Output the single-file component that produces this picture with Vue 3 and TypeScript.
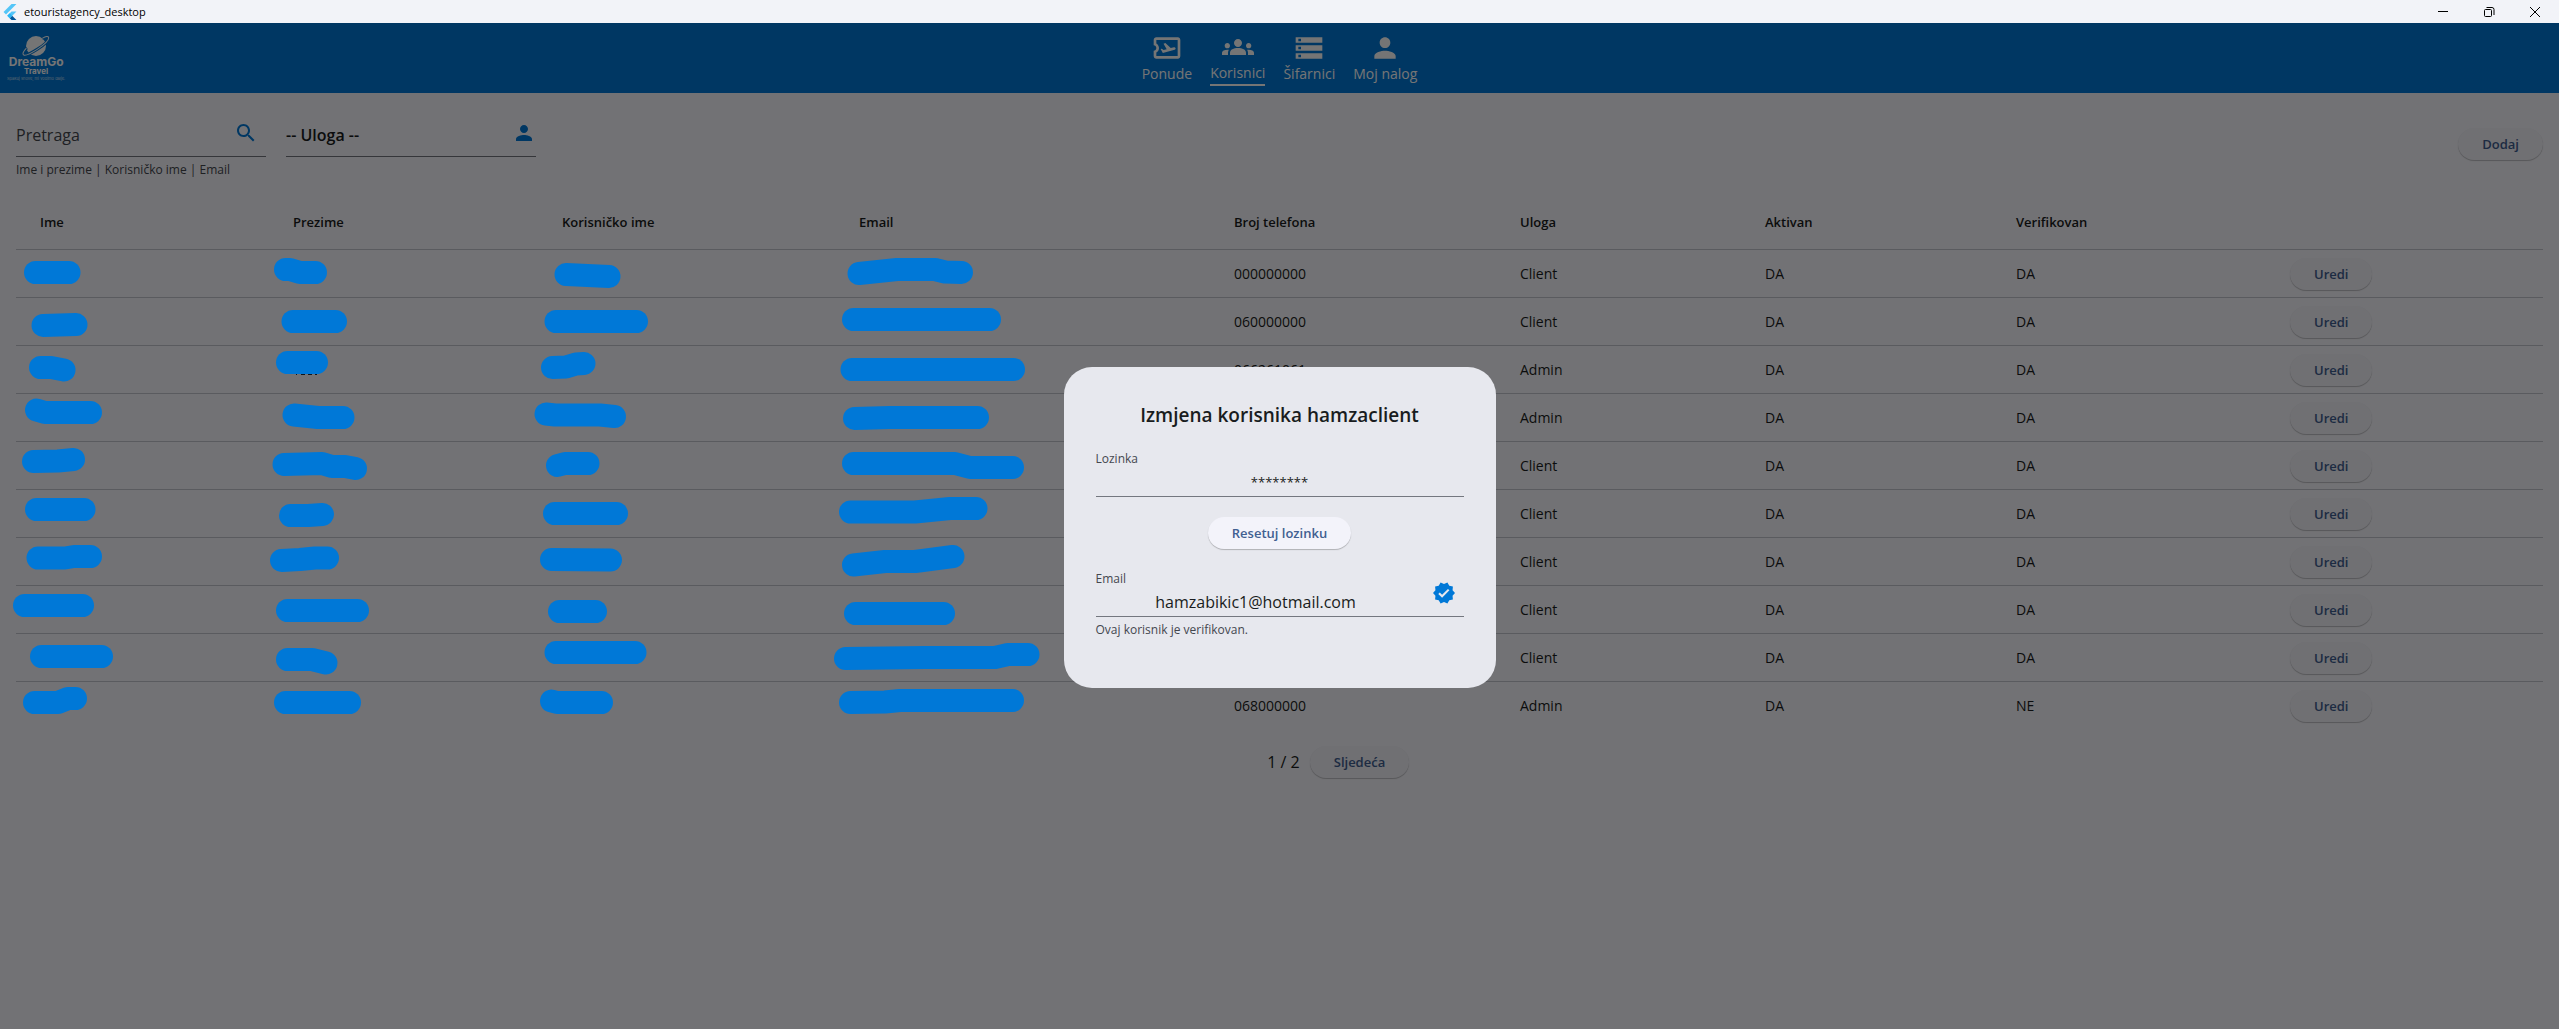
<script setup lang="ts">
import { ref } from 'vue'

interface NavItem { label: string; icon: string; active: boolean }
interface Column { title: string; weight: number }
interface User { phone: string; role: string; active: string; verified: string }

const personIcon = 'M12 12c2.21 0 4-1.79 4-4s-1.79-4-4-4-4 1.79-4 4 1.79 4 4 4zm0 2c-2.67 0-8 1.34-8 4v2h16v-2c0-2.66-5.33-4-8-4z'
const searchIcon = 'M15.5 14h-.79l-.28-.27C15.41 12.59 16 11.11 16 9.5 16 5.91 13.09 3 9.5 3S3 5.91 3 9.5 5.91 16 9.5 16c1.61 0 3.09-.59 4.23-1.57l.27.28v.79l5 4.99L20.49 19l-4.99-5zm-6 0C7.01 14 5 11.99 5 9.5S7.01 5 9.5 5 14 7.01 14 9.5 11.99 14 9.5 14z'
const verifiedIcon = 'M23 12l-2.44-2.79.34-3.69-3.61-.82-1.89-3.2L12 2.96 8.6 1.5 6.71 4.69 3.1 5.5l.34 3.7L1 12l2.44 2.79-.34 3.7 3.61.82L8.6 22.5l3.4-1.47 3.4 1.46 1.89-3.19 3.61-.82-.34-3.69L23 12zm-12.91 4.72l-3.8-3.81 1.48-1.48 2.32 2.33 5.85-5.87 1.48 1.48-7.33 7.35z'

const nav: NavItem[] = [
  { label: 'Ponude', active: false, icon: 'M20.19 4H4c-1.1 0-1.99.9-1.99 2v4c1.1 0 1.99.9 1.99 2s-.89 2-2 2v4c0 1.1.9 2 2 2h16.19c1 0 1.81-.9 1.81-2V6c0-1.1-.81-2-1.81-2zM20 18H4v-2.54c1.19-.69 2-1.99 2-3.46s-.81-2.77-2-3.46V6h16v12zM17.73 13.3l-8.86 2.36-1.66-2.88.93-.25 1.26.99 2.39-.64-2.4-4.16 1.4-.38 4.01 3.74 2.44-.65c.51-.14 1.04.17 1.18.68.13.51-.17 1.04-.69 1.19z' },
  { label: 'Korisnici', active: true, icon: 'M12 12.75c1.63 0 3.07.39 4.24.9 1.08.48 1.76 1.56 1.76 2.73V18H6v-1.61c0-1.18.68-2.26 1.76-2.73 1.17-.52 2.61-.91 4.24-.91zM4 13c1.1 0 2-.9 2-2s-.9-2-2-2-2 .9-2 2 .9 2 2 2zm1.13 1.1c-.37-.06-.74-.1-1.13-.1-.99 0-1.93.21-2.78.58C.48 14.9 0 15.62 0 16.43V18h4.5v-1.61c0-.83.23-1.61.63-2.29zM20 13c1.1 0 2-.9 2-2s-.9-2-2-2-2 .9-2 2 .9 2 2 2zm4 3.43c0-.81-.48-1.53-1.22-1.85-.85-.37-1.79-.58-2.78-.58-.39 0-.76.04-1.13.1.4.68.63 1.46.63 2.29V18H24v-1.57zM12 6c1.66 0 3 1.34 3 3s-1.34 3-3 3-3-1.34-3-3 1.34-3 3-3z' },
  { label: 'Šifarnici', active: false, icon: 'M2 20h20v-4H2v4zm2-3h2v2H4v-2zM2 4v4h20V4H2zm4 3H4V5h2v2zm-4 7h20v-4H2v4zm2-3h2v2H4v-2z' },
  { label: 'Moj nalog', active: false, icon: personIcon },
]

const columns: Column[] = [
  { title: 'Ime', weight: 253 },
  { title: 'Prezime', weight: 269 },
  { title: 'Korisničko ime', weight: 297 },
  { title: 'Email', weight: 375 },
  { title: 'Broj telefona', weight: 286 },
  { title: 'Uloga', weight: 245 },
  { title: 'Aktivan', weight: 251 },
  { title: 'Verifikovan', weight: 274 },
  { title: '', weight: 277 },
]
const totalWeight = columns.reduce((sum, c) => sum + c.weight, 0)

const users: User[] = [
  { phone: '000000000', role: 'Client', active: 'DA', verified: 'DA' },
  { phone: '060000000', role: 'Client', active: 'DA', verified: 'DA' },
  { phone: '066261061', role: 'Admin', active: 'DA', verified: 'DA' },
  { phone: '', role: 'Admin', active: 'DA', verified: 'DA' },
  { phone: '', role: 'Client', active: 'DA', verified: 'DA' },
  { phone: '', role: 'Client', active: 'DA', verified: 'DA' },
  { phone: '', role: 'Client', active: 'DA', verified: 'DA' },
  { phone: '', role: 'Client', active: 'DA', verified: 'DA' },
  { phone: '', role: 'Client', active: 'DA', verified: 'DA' },
  { phone: '068000000', role: 'Admin', active: 'DA', verified: 'NE' },
]

// Marker strokes that hide the personal data, one polyline per cell.
const strokes: string[] = [
  '35.5,272.5 69,272.5', '285.5,269.5 290,269.5 300,272.5 315.5,272.5', '566,274.5 609,276.5', '859,273.5 897,269.5 935,269.5 945,272 961.5,272.5',
  '43,325.5 76,324.5', '293,321.5 335.5,321.5', '556,321.5 636.5,321.5', '853.5,319.5 989.5,319.5',
  '40.5,367.5 51,367.5 64,370', '287.5,362.5 316.5,362.5', '552.5,367.5 566,367 576,364 584,363.5', '852,369.5 1013.5,369.5',
  '36.5,410 45,412.5 90.5,412.5', '294,415 318,417.5 343,417.5', '546,414 555,415 600,415 614.5,416.5', '854.5,418.5 890,417.5 977.5,417.5',
  '33.5,461.5 58,461 73.5,459.5', '284,464.5 322,463.5 332,466.5 345,466.5 355.5,468.5', '557.5,465.5 565,463.5 588,463.5', '853.5,463.5 955,463.5 970,467.5 1012.5,467.5',
  '36.5,509.5 84,509.5', '290.5,515.5 308,515.5 322.5,514.5', '554.5,513.5 616.5,513.5', '850.5,512 915,512 950,508.5 976,508.5',
  '38,558 65,558 74,556.5 90.5,556.5', '281.5,560.5 300,559.5 315,558 327.5,558', '551.5,559.5 610.5,560', '853.5,565 885,561.5 915,561.5 953,556.5',
  '24.5,605.5 82.5,605.5', '287.5,610.5 357.5,610.5', '559.5,611.5 595.5,611.5', '855.5,613.5 943.5,613.5',
  '41.5,656.5 101.5,656.5', '287.5,659.5 312,659.5 326,663', '556,652.5 635,652.5', '845.5,658.5 925,657.5 995,657.5 1008,654.5 1028,654.5',
  '34.5,702.5 58,702.5 68,698.5 75.5,698.5', '285.5,702.5 349.5,702.5', '551.5,701 557,702.5 601.5,702.5', '850.5,702.5 885,702 900,700.5 1012.5,700.5',
]

const query = ref('')
const password = ref('********')
const email = ref('hamzabikic1@hotmail.com')
</script>

<template>
  <div class="window">
    <div class="titlebar">
      <svg class="flutter" viewBox="0 0 24 24" aria-hidden="true">
        <path fill="#54c5f8" d="M14.3 0L2.3 12 6 15.7 21.7 0zM14.3 11.1L7.9 17.5l3.7 3.7 10.1-10.1z" />
        <path fill="#01579b" d="M11.6 21.2L14.3 24h7.4l-6.4-6.5z" />
        <path fill="#29b6f6" d="M7.9 17.5l3.7-3.7 3.7 3.7-3.7 3.7z" />
      </svg>
      <span class="app-name">etouristagency_desktop</span>
      <div class="controls">
        <button type="button" aria-label="Minimize">
          <svg viewBox="0 0 12 12"><path d="M1 5.5h10" /></svg>
        </button>
        <button type="button" aria-label="Restore">
          <svg viewBox="0 0 12 12"><rect x="1.5" y="3.5" width="7" height="7" rx="1" /><path d="M3.5 1.5h5.500a2 2 0 0 1 2 2V9" /></svg>
        </button>
        <button type="button" aria-label="Close">
          <svg viewBox="0 0 12 12"><path d="M1 1l10 10M11 1L1 11" /></svg>
        </button>
      </div>
    </div>

    <div class="stage">
      <header class="appbar">
        <a class="logo" href="#">
          <svg class="planet" viewBox="0 0 32 22" aria-hidden="true">
            <circle cx="16" cy="11" r="10" fill="#fff" />
            <g transform="rotate(-27 16 11)" fill="none">
              <path d="M7 8.500C2 10 0 12 1 13.500c2 3 28 1 30-4 .8-2-2-2.500-6-2.500" stroke="#0078d7" stroke-width="3" />
              <path d="M6.500 8.500C2 10 0 12 1 13.500c2 3 28 1 30-4 .8-2-2-2.500-6-2.500" stroke="#fff" stroke-width="1" />
            </g>
          </svg>
          <span class="brand">DreamGo</span>
          <span class="brand-sub">Travel</span>
          <span class="tagline">Spakuj snove, mi vodimo dalje.</span>
        </a>
        <nav class="nav">
          <a v-for="item in nav" :key="item.label" href="#" class="nav-item" :class="{ active: item.active }">
            <svg viewBox="0 0 24 24" aria-hidden="true"><path :d="item.icon" fill-rule="evenodd" /></svg>
            <span>{{ item.label }}</span>
          </a>
        </nav>
      </header>

      <main class="content">
        <div class="filters">
          <div class="field">
            <div class="field-line">
              <input id="search" v-model="query" type="text" placeholder="Pretraga" aria-label="Pretraga" />
              <svg class="search-icon" viewBox="0 0 24 24" aria-hidden="true"><path :d="searchIcon" /></svg>
            </div>
            <label class="helper" for="search">Ime i prezime | Korisničko ime | Email</label>
          </div>
          <div class="field">
            <div class="field-line">
              <select aria-label="Uloga">
                <option>-- Uloga --</option>
                <option>Admin</option>
                <option>Client</option>
              </select>
              <svg viewBox="0 0 24 24" aria-hidden="true"><path :d="personIcon" /></svg>
            </div>
          </div>
          <button type="button" class="pill add">Dodaj</button>
        </div>

        <table class="users">
          <colgroup>
            <col v-for="c in columns" :key="c.title" :style="{ width: (c.weight / totalWeight) * 100 + '%' }" />
          </colgroup>
          <thead>
            <tr><th v-for="c in columns" :key="c.title" scope="col">{{ c.title }}</th></tr>
          </thead>
          <tbody>
            <tr v-for="(u, i) in users" :key="i">
              <td></td>
              <td></td>
              <td></td>
              <td></td>
              <td>{{ u.phone }}</td>
              <td>{{ u.role }}</td>
              <td>{{ u.active }}</td>
              <td>{{ u.verified }}</td>
              <td><button type="button" class="pill">Uredi</button></td>
            </tr>
          </tbody>
        </table>

        <div class="pager">
          <span class="page">1 / 2</span>
          <button type="button" class="pill">Sljedeća</button>
        </div>
      </main>

      <div class="scrim">
        <section class="dialog" role="dialog" aria-modal="true" aria-labelledby="dialog-title">
          <h2 id="dialog-title">Izmjena korisnika hamzaclient</h2>
          <label for="password">Lozinka</label>
          <div class="dialog-line">
            <input id="password" v-model="password" class="stars" type="text" readonly />
          </div>
          <button type="button" class="pill reset">Resetuj lozinku</button>
          <label for="email">Email</label>
          <div class="dialog-line">
            <input id="email" v-model="email" type="text" readonly />
            <svg viewBox="0 0 24 24" aria-hidden="true"><path :d="verifiedIcon" /></svg>
          </div>
          <p>Ovaj korisnik je verifikovan.</p>
        </section>
      </div>
    </div>

    <svg class="marker" aria-hidden="true">
      <path class="residue" d="M296 374.500h1M301 374.500h4M308 374.500h4M315 374.500h2" />
      <polyline v-for="s in strokes" :key="s" :points="s" />
    </svg>
  </div>
</template>

<style>
body {
  margin: 0;
}
</style>

<style scoped>
.window {
  position: relative;
  display: flex;
  flex-direction: column;
  min-height: 100vh;
  overflow: hidden;
  font-family: "Open Sans", "Noto Sans", sans-serif;
  font-size: 14px;
  line-height: 20px;
  color: #191c20;
}
.window * {
  box-sizing: border-box;
}
button,
input,
select {
  font-family: inherit;
  color: inherit;
}
a {
  color: inherit;
  text-decoration: none;
}

.titlebar {
  display: flex;
  align-items: center;
  height: 23px;
  padding: 0 1px 0 2px;
  background: #f2f3f8;
  color: #000;
}
.flutter {
  width: 16px;
  height: 16px;
}
.app-name {
  margin-left: 6px;
  font-size: 11px;
}
.controls {
  display: flex;
  margin-left: auto;
}
.controls button {
  display: flex;
  align-items: center;
  justify-content: center;
  width: 46px;
  height: 21px;
  padding: 0;
  border: 0;
  background: none;
}
.controls svg {
  width: 12px;
  height: 12px;
  fill: none;
  stroke: #000;
  stroke-width: 1;
}

.stage {
  position: relative;
  flex: 1;
  background: #f9f9ff;
}
.appbar {
  display: grid;
  grid-template-columns: 1fr auto 1fr;
  align-items: center;
  height: 70px;
  padding: 0 7px;
  background: #0078d7;
  color: #fff;
}
.logo {
  display: flex;
  flex-direction: column;
  align-items: center;
  justify-self: start;
  font-family: Inter, sans-serif;
  font-weight: 700;
}
.planet {
  width: 32px;
  height: 22px;
}
.brand {
  font-size: 12px;
  line-height: 10px;
}
.brand-sub {
  font-size: 8px;
  line-height: 9px;
}
.tagline {
  font-size: 4px;
  font-weight: 400;
  line-height: 5px;
  opacity: 0.7;
}
.nav {
  display: flex;
  align-items: center;
  gap: 18px;
}
.nav-item {
  display: flex;
  flex-direction: column;
  align-items: center;
}
.nav-item svg {
  width: 32px;
  height: 32px;
  fill: currentColor;
}
.nav-item.active span {
  padding-bottom: 1px;
  border-bottom: 2px solid currentColor;
}

.content {
  padding: 16px;
}
.filters {
  display: flex;
  align-items: center;
  gap: 20px;
}
.field {
  align-self: flex-start;
  width: 250px;
}
.field-line {
  display: flex;
  align-items: center;
  height: 48px;
  border-bottom: 1px solid #74777f;
}
.field-line input,
.field-line select {
  flex: 1;
  min-width: 0;
  height: 100%;
  padding: 4px 0 0;
  border: 0;
  outline: 0;
  background: none;
  appearance: none;
  font-size: 16px;
}
.field-line select {
  font-weight: 600;
}
.field-line input::placeholder {
  color: #44474e;
  opacity: 1;
}
.field-line svg {
  width: 24px;
  height: 24px;
  fill: #0078d7;
}
.field-line .search-icon {
  margin-right: 8px;
}
.helper {
  display: block;
  margin-top: 5px;
  font-size: 12px;
  line-height: 16px;
  color: #44474e;
}

.pill {
  height: 32px;
  padding: 0 24px;
  border: 0;
  border-radius: 16px;
  background: #f3f3fa;
  box-shadow: 0 1px 1px rgba(0, 0, 0, 0.24);
  color: #415f91;
  font-size: 13px;
  font-weight: 600;
  line-height: 20px;
  white-space: nowrap;
}
.add {
  margin-left: auto;
}

.users {
  width: 100%;
  margin-top: 16px;
  border-collapse: separate;
  border-spacing: 0;
  table-layout: fixed;
}
.users th {
  height: 56px;
  padding: 0 0 0 24px;
  border-bottom: 1px solid #c4c6d0;
  font-size: 13px;
  font-weight: 600;
  text-align: left;
}
.users td {
  height: 48px;
  padding: 0 0 0 24px;
  border-bottom: 1px solid #c4c6d0;
}
.users tr:last-child td {
  border-bottom-color: transparent;
}

.pager {
  display: grid;
  grid-template-columns: 1fr auto 1fr;
  align-items: center;
  gap: 10px;
  margin-top: 16px;
  padding-left: 8px;
}
.page {
  grid-column: 2;
  font-size: 16px;
}
.pager .pill {
  justify-self: start;
}

.scrim {
  position: absolute;
  inset: 0;
  display: flex;
  align-items: center;
  justify-content: center;
  padding-top: 3px;
  background: rgba(0, 0, 0, 0.54);
}
.dialog {
  display: flex;
  flex-direction: column;
  width: 432px;
  padding: 32px 32px 50px;
  border-radius: 28px;
  background: #e7e8ee;
}
.dialog h2 {
  margin: 0 0 20px;
  font-size: 19px;
  font-weight: 600;
  line-height: 32px;
  text-align: center;
}
.dialog label,
.dialog p {
  margin: 0;
  font-size: 12px;
  line-height: 16px;
  color: #44474e;
}
.dialog p {
  margin-top: 5px;
}
.dialog-line {
  display: flex;
  align-items: center;
  height: 30px;
  border-bottom: 1px solid #74777f;
}
.dialog-line input {
  flex: 1;
  min-width: 0;
  height: 100%;
  padding: 0;
  border: 0;
  outline: 0;
  background: none;
  font-size: 16px;
  text-align: center;
}
.dialog-line .stars {
  font-size: 13px;
}
.dialog-line svg {
  width: 24px;
  height: 24px;
  margin: -18px 8px 0 16px;
  fill: #0078d7;
}
.reset {
  align-self: center;
  margin: 20px 0 22px;
}

.marker {
  position: absolute;
  inset: 0;
  width: 100%;
  height: 100%;
  fill: none;
  stroke: #0078d7;
  stroke-width: 23;
  stroke-linecap: round;
  stroke-linejoin: round;
  pointer-events: none;
}
.marker .residue {
  stroke: #101418;
  stroke-width: 1;
  stroke-linecap: butt;
}
</style>
